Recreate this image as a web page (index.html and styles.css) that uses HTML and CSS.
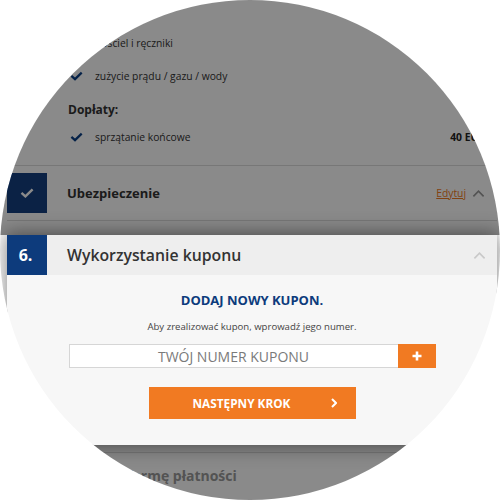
FILE: index.html
```html
<!DOCTYPE html>
<html lang="pl">
<head>
<meta charset="utf-8">
<title>Kupon</title>
<link rel="stylesheet" href="styles.css">
</head>
<body>
<div class="lens">
  <section class="shade shade-top">
    <ul class="features features-first">
      <li class="feature">
        <svg class="tick" viewBox="0 0 14 10"><path d="M1.5 4.8 L5.4 8.4 L12.6 1.4"/></svg>
        <span>pościel i ręczniki</span>
      </li>
      <li class="feature">
        <svg class="tick" viewBox="0 0 14 10"><path d="M1.5 4.8 L5.4 8.4 L12.6 1.4"/></svg>
        <span>zużycie prądu / gazu / wody</span>
      </li>
    </ul>
    <h4 class="extras-title">Dopłaty:</h4>
    <ul class="features">
      <li class="feature feature-short">
        <svg class="tick" viewBox="0 0 14 10"><path d="M1.5 4.8 L5.4 8.4 L12.6 1.4"/></svg>
        <span>sprzątanie końcowe</span>
        <b class="price">40 EUR</b>
      </li>
    </ul>
    <div class="step step-done">
      <div class="step-badge badge-dark">
        <svg class="badge-tick" viewBox="0 0 14 10"><path d="M1.5 4.8 L5.4 8.4 L12.6 1.4"/></svg>
      </div>
      <div class="step-title title-done">Ubezpieczenie</div>
      <a class="step-edit" href="#">Edytuj</a>
      <svg class="chev chev-dark" viewBox="0 0 14 9"><path d="M1.5 7.5 L7 2 L12.5 7.5"/></svg>
    </div>
  </section>

  <section class="panel">
    <div class="step step-active">
      <div class="step-badge badge-blue">6.</div>
      <div class="step-title title-active">Wykorzystanie kuponu</div>
      <svg class="chev chev-light" viewBox="0 0 14 9"><path d="M1.5 7.5 L7 2 L12.5 7.5"/></svg>
    </div>
    <div class="coupon">
      <h3 class="coupon-title">DODAJ NOWY KUPON.</h3>
      <p class="coupon-hint">Aby zrealizować kupon, wprowadź jego numer.</p>
      <div class="coupon-field">
        <input class="coupon-input" type="text" placeholder="TWÓJ NUMER KUPONU">
        <button class="coupon-add" type="button">
          <svg viewBox="0 0 10 10"><path d="M5 0.5 V9.5 M0.5 5 H9.5"/></svg>
        </button>
      </div>
      <button class="next-btn" type="button">
        <span>NASTĘPNY KROK</span>
        <svg class="next-chev" viewBox="0 0 6 10"><path d="M1 1 L5 5 L1 9"/></svg>
      </button>
    </div>
  </section>

  <section class="shade shade-bottom">
    <div class="step step-pending">
      <div class="step-badge badge-gray">7.</div>
      <div class="step-title title-pending">Wybierz formę płatności</div>
    </div>
  </section>
</div>
</body>
</html>
```

FILE: styles.css
```css
* { box-sizing: border-box; }

html, body {
  margin: 0;
  padding: 0;
  background: #fff;
}

body {
  font-family: "Open Sans", "Liberation Sans", sans-serif;
  color: #333;
  width: 500px;
  height: 500px;
  overflow: hidden;
}

.lens {
  width: 500px;
  height: 500px;
  border-radius: 50%;
  overflow: hidden;
  background: #fff;
  position: relative;
  display: flex;
  flex-direction: column;
}

.shade {
  position: relative;
  background: #fff;
  padding: 0 3px 0 7px;
}

.shade::after {
  content: "";
  position: absolute;
  inset: 0;
  background: rgba(0, 0, 0, 0.46);
  z-index: 1;
}

.shade-top {
  height: 235px;
  flex: none;
}

.shade-bottom {
  flex: 1;
  padding-top: 7px;
}

/* feature list */
.features {
  list-style: none;
  margin: 0;
  padding: 0 0 0 63px;
}

.features-first {
  padding-top: 26px;
}

.feature {
  height: 33px;
  display: flex;
  align-items: center;
  font-size: 10.3px;
  color: #333;
}

.feature-short {
  height: 30px;
  padding-right: 12px;
}

.tick {
  width: 13px;
  height: 10px;
  margin-right: 12px;
  flex: none;
}

.tick path {
  fill: none;
  stroke: #0b3f86;
  stroke-width: 2.4;
}

.price {
  margin-left: auto;
  font-weight: 700;
  font-size: 10.3px;
  color: #222;
}

.extras-title {
  margin: 6px 0 0 61px;
  height: 24px;
  line-height: 24px;
  font-size: 12px;
  font-weight: 700;
  color: #333;
}

/* step rows */
.step {
  display: flex;
  align-items: center;
}

.step-badge {
  width: 40px;
  height: 40px;
  flex: none;
  display: flex;
  align-items: center;
  justify-content: center;
  color: #fff;
  font-weight: 700;
  font-size: 16px;
}

.badge-dark { background: #153f80; }
.badge-blue { background: #0d3b7c; padding-right: 3px; }
.badge-gray { background: #c5c5c5; }

.badge-tick {
  width: 14px;
  height: 10px;
}

.badge-tick path {
  fill: none;
  stroke: #fff;
  stroke-width: 2.4;
}

.step-title {
  margin-left: 20px;
  font-weight: 700;
  color: #333;
}

.step-done {
  margin-top: 13px;
  border-top: 1px solid #dcdcdc;
  border-bottom: 1px solid #dcdcdc;
  padding: 7px 12px 7px 0;
}

.title-done {
  font-size: 13px;
}

.step-edit {
  margin-left: auto;
  font-size: 10.3px;
  color: #f07b23;
  text-decoration: underline;
}

.chev {
  width: 13px;
  height: 9px;
  margin-left: 6px;
  flex: none;
}

.chev path {
  fill: none;
  stroke-width: 1.8;
}

.chev-dark path { stroke: #999; }
.chev-light path { stroke: #c9c9c9; }

/* highlighted panel */
.panel {
  position: relative;
  z-index: 2;
  margin: 0 3px 0 7px;
  height: 210px;
  flex: none;
  background: #f7f7f7;
  box-shadow: 0 0 18px 2px rgba(0, 0, 0, 0.45);
}

.step-active {
  background: #eeeeee;
  padding-right: 11px;
}

.title-active {
  font-size: 15.8px;
  font-weight: 600;
  flex: 1;
}

.coupon {
  padding-top: 16px;
  display: flex;
  flex-direction: column;
  align-items: center;
}

.coupon-title {
  margin: 0;
  font-size: 13px;
  line-height: 18px;
  font-weight: 700;
  color: #0d3b7c;
}

.coupon-hint {
  margin: 11px 0 0;
  font-size: 9.6px;
  line-height: 14px;
  color: #444;
}

.coupon-field {
  margin-top: 10px;
  display: flex;
  width: 367px;
  height: 24px;
}

.coupon-input {
  flex: 1;
  min-width: 0;
  height: 24px;
  border: 1px solid #d6d6d6;
  border-right: none;
  background: #fff;
  padding: 0;
  font-family: "Open Sans", "Liberation Sans", sans-serif;
  font-size: 14px;
  text-align: center;
  outline: none;
}

.coupon-input::placeholder {
  color: #7a7a7a;
  opacity: 1;
}

.coupon-add {
  width: 38px;
  height: 24px;
  border: none;
  padding: 0;
  background: #f17a22;
  display: flex;
  align-items: center;
  justify-content: center;
}

.coupon-add svg {
  width: 10px;
  height: 10px;
}

.coupon-add path {
  stroke: #fff;
  stroke-width: 2.6;
  fill: none;
}

.next-btn {
  margin-top: 19px;
  width: 207px;
  height: 32px;
  border: none;
  background: #f17a22;
  display: flex;
  align-items: center;
  padding: 0 19px 0 44px;
  font-family: "Open Sans", "Liberation Sans", sans-serif;
  font-weight: 700;
  font-size: 11.8px;
  color: #fff;
}

.next-chev {
  margin-left: auto;
  width: 6px;
  height: 10px;
}

.next-chev path {
  fill: none;
  stroke: #fff;
  stroke-width: 2;
}

.step-pending {
  border-top: 1px solid #dcdcdc;
  padding-top: 2px;
}

.title-pending {
  font-size: 14px;
  color: #999;
}
```
